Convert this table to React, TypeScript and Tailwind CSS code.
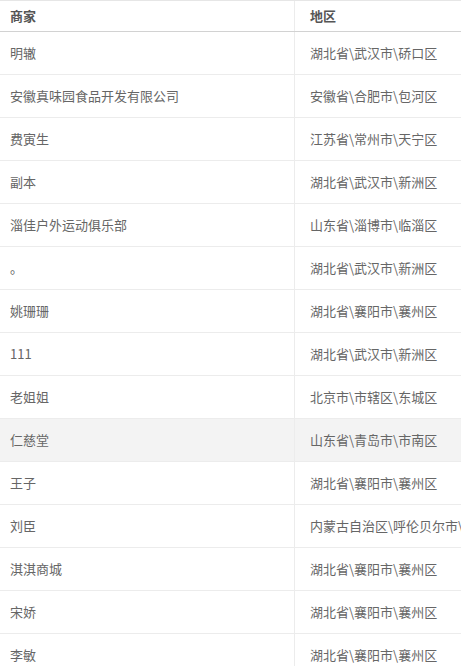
import React from "react";

const rows: [string, string][] = [
  ["明辙", "湖北省\\武汉市\\硚口区"],
  ["安徽真味园食品开发有限公司", "安徽省\\合肥市\\包河区"],
  ["费寅生", "江苏省\\常州市\\天宁区"],
  ["副本", "湖北省\\武汉市\\新洲区"],
  ["淄佳户外运动俱乐部", "山东省\\淄博市\\临淄区"],
  ["。", "湖北省\\武汉市\\新洲区"],
  ["姚珊珊", "湖北省\\襄阳市\\襄州区"],
  ["111", "湖北省\\武汉市\\新洲区"],
  ["老姐姐", "北京市\\市辖区\\东城区"],
  ["仁慈堂", "山东省\\青岛市\\市南区"],
  ["王子", "湖北省\\襄阳市\\襄州区"],
  ["刘臣", "内蒙古自治区\\呼伦贝尔市\\海拉尔区"],
  ["淇淇商城", "湖北省\\襄阳市\\襄州区"],
  ["宋娇", "湖北省\\襄阳市\\襄州区"],
  ["李敏", "湖北省\\襄阳市\\襄州区"],
];

export default function App() {
  return (
    <div
      className="h-[666px] w-full overflow-hidden bg-white text-[13px] text-[#666]"
      style={{ fontFamily: '"Noto Sans CJK SC", "Noto Sans", sans-serif' }}
    >
      <div className="w-[600px]">
        <div className="flex h-[32px] border-t border-b border-t-[#e6e6e6] border-b-[#d2d2d2] font-bold text-[#555]">
          <div className="flex w-[295px] shrink-0 items-center border-r border-[#ececec] pl-[10px]">商家</div>
          <div className="flex flex-1 items-center pl-[15px]">地区</div>
        </div>
        {rows.map(([a, b], i) => (
          <div
            key={i}
            className={
              "flex h-[43px] border-b border-[#ececec] " + (i === 9 ? "bg-[#f3f3f3]" : "bg-white")
            }
          >
            <div className="flex w-[295px] shrink-0 items-center border-r border-[#ececec] pl-[10px] whitespace-nowrap">
              {a}
            </div>
            <div className="flex flex-1 items-center pl-[15px] whitespace-nowrap">{b}</div>
          </div>
        ))}
      </div>
    </div>
  );
}
